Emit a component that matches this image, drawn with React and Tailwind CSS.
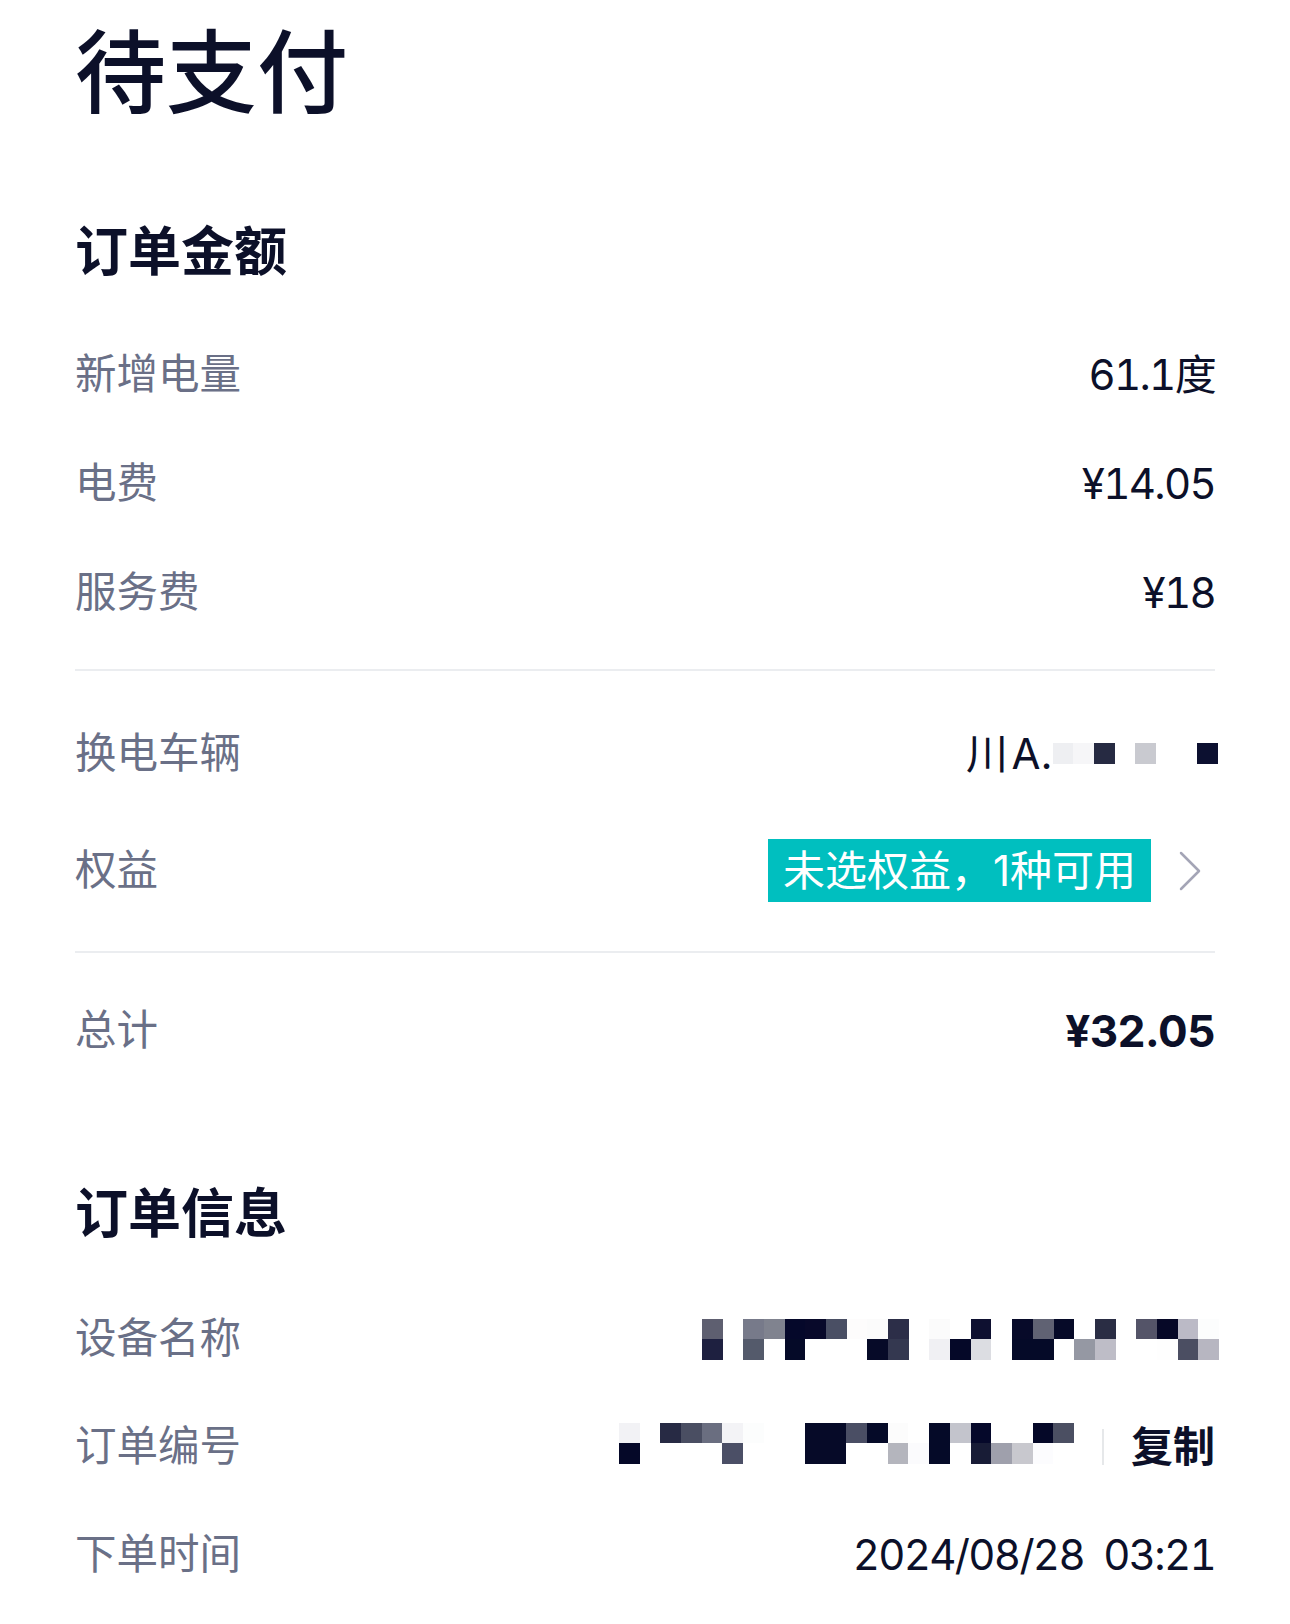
import React from 'react';

// pixelated (masked) values, one class per cell
const plateCells = ['bg-[#eeeff2]', 'bg-[#f6f6f8]', 'bg-[#262a42]', 'bg-white', 'bg-[#c9cad0]', 'bg-white', 'bg-white', 'bg-[#0c1030]'];

const deviceCells = [
  'bg-[#5e5f70]', 'bg-white', 'bg-[#777a8a]', 'bg-[#80838f]', 'bg-[#05082a]', 'bg-[#08092a]', 'bg-[#4a4f64]', 'bg-[#fdfcfc]', 'bg-[#fbfbfb]', 'bg-[#2c2e48]', 'bg-white', 'bg-[#fbfbfb]', 'bg-white',
  'bg-[#0e1030]', 'bg-white', 'bg-[#070a29]', 'bg-[#606273]', 'bg-[#060a28]', 'bg-white', 'bg-[#2a2d44]', 'bg-white', 'bg-[#545468]', 'bg-[#060827]', 'bg-[#bbbac6]', 'bg-[#fcfdfd]',
  'bg-[#1e2040]', 'bg-white', 'bg-[#545a6b]', 'bg-white', 'bg-[#050a28]', 'bg-white', 'bg-white', 'bg-white', 'bg-[#060a28]', 'bg-[#343850]', 'bg-white', 'bg-[#f0f0f3]', 'bg-[#050828]',
  'bg-[#dcdde2]', 'bg-white', 'bg-[#050a28]', 'bg-[#050a28]', 'bg-white', 'bg-[#9598a3]', 'bg-[#bebdc7]', 'bg-white', 'bg-white', 'bg-[#fefefe]', 'bg-[#4b4e62]', 'bg-[#b7b6c1]',
];

const orderCells = [
  'bg-[#f2f2f5]', 'bg-white', 'bg-[#272a44]', 'bg-[#4a4e62]', 'bg-[#6a6e80]', 'bg-[#f3f3f6]', 'bg-[#fcfdfd]', 'bg-white', 'bg-white', 'bg-[#060a28]', 'bg-[#060a28]',
  'bg-[#4a4e64]', 'bg-[#050a28]', 'bg-[#fcfcfc]', 'bg-white', 'bg-[#050a28]', 'bg-[#c3c4cc]', 'bg-[#05082a]', 'bg-white', 'bg-white', 'bg-[#050828]', 'bg-[#4b4f62]',
  'bg-[#050828]', 'bg-white', 'bg-white', 'bg-white', 'bg-white', 'bg-[#4b4f66]', 'bg-white', 'bg-white', 'bg-white', 'bg-[#060a28]', 'bg-[#060a28]',
  'bg-white', 'bg-white', 'bg-[#b4b5bd]', 'bg-[#fbfbfd]', 'bg-[#050a28]', 'bg-white', 'bg-[#181c36]', 'bg-[#9fa0ac]', 'bg-[#c8c8ce]', 'bg-[#fcfcfe]', 'bg-white',
];

const Row = ({ label, children, className = 'h-[109px]' }) => (
  <div className={`flex items-center justify-between ${className}`}>
    <span className="text-[41.5px] leading-none text-[#6a7087]">{label}</span>
    {children}
  </div>
);

const Value = ({ children }) => (
  <span className="text-[42px] leading-none tabular-nums tracking-[-0.04em] text-[#0c1029] whitespace-pre">{children}</span>
);

const Divider = ({ className }) => <div className={`h-[2px] bg-[#ebedf0] ${className}`} />;

const App = () => (
  <div className="min-h-screen bg-white px-[75px] font-['Inter','Noto_Sans_CJK_SC',sans-serif] text-[#0c1029]">
    {/* Status */}
    <div className="flex h-[146px] items-center">
      <h1 className="text-[91px] font-medium leading-none">待支付</h1>
    </div>

    {/* Order amount */}
    <div className="mt-[54px] flex h-[104px] items-center">
      <h2 className="text-[53px] font-bold leading-none">订单金额</h2>
    </div>
    <div className="mt-[16px]">
      <Row label="新增电量"><Value>61.1度</Value></Row>
      <Row label="电费"><Value>¥14.05</Value></Row>
      <Row label="服务费"><Value>¥18</Value></Row>
    </div>

    <Divider className="mt-[22px]" />

    <Row label="换电车辆" className="mt-[28px] h-[109px]">
      <div className="flex items-center">
        <Value>川</Value>
        <span className="ml-[5px] text-[42px] leading-none">A.</span>
        <div className="-mr-[3px] flex">
          {plateCells.map((c, i) => (
            <div key={i} className={`h-[21px] w-[20.7px] ${c}`} />
          ))}
        </div>
      </div>
    </Row>

    <Row label="权益" className="mt-[8px] h-[109px]">
      <div className="flex items-center">
        <span className="flex h-[63px] items-center bg-[#00bfbf] px-[15px] text-[42px] leading-none text-white">
          未选权益，1种可用
        </span>
        <svg className="ml-[28px] mr-[14px]" width="22" height="40" viewBox="0 0 22 40" fill="none">
          <polyline points="2,2 20,20 2,38" stroke="#a4a5b6" strokeWidth="2.5" strokeLinecap="round" strokeLinejoin="round" />
        </svg>
      </div>
    </Row>

    <Divider className="mt-[26px]" />

    <Row label="总计" className="mt-[23px] h-[109px]">
      <span className="text-[44px] font-bold leading-none tracking-[-0.01em]">¥32.05</span>
    </Row>

    {/* Order info */}
    <div className="mt-[77px] flex h-[104px] items-center">
      <h2 className="text-[53px] font-bold leading-none">订单信息</h2>
    </div>
    <div className="mt-[19px]">
      <Row label="设备名称" className="h-[108px]">
        <div className="-mr-[4px] grid grid-cols-[repeat(25,20.7px)] auto-rows-[20.5px]">
          {deviceCells.map((c, i) => (
            <div key={i} className={c} />
          ))}
        </div>
      </Row>
      <Row label="订单编号" className="h-[108px]">
        <div className="flex items-center">
          <div className="-mt-[8px] grid grid-cols-[repeat(22,20.7px)] auto-rows-[20.5px]">
            {orderCells.map((c, i) => (
              <div key={i} className={c} />
            ))}
          </div>
          <div className="ml-[28px] h-[36px] w-[2px] bg-[#e6e8ea]" />
          <span className="ml-[27px] text-[42px] font-bold leading-none">复制</span>
        </div>
      </Row>
      <Row label="下单时间" className="h-[108px]">
        <Value>2024/08/28  03:21</Value>
      </Row>
    </div>
  </div>
);

export default App;
